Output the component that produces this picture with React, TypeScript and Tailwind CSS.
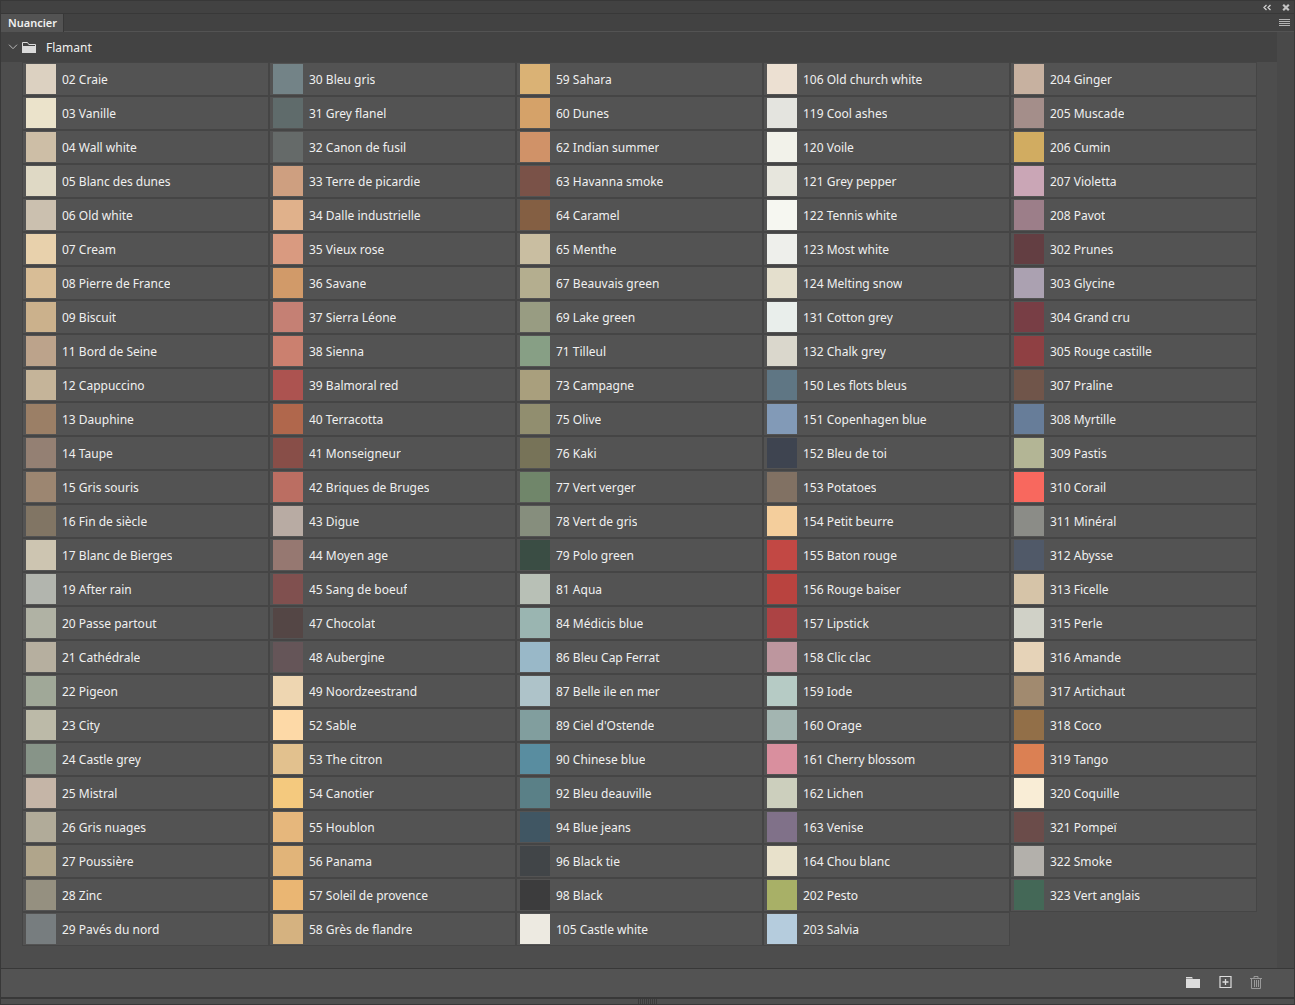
import { useState } from 'react';

type Swatch = [name: string, color: string];

const columns: Swatch[][] = [
  [
    ['02 Craie', '#dcd1c1'],
    ['03 Vanille', '#ebe3cb'],
    ['04 Wall white', '#cdbea6'],
    ['05 Blanc des dunes', '#dfd9c5'],
    ['06 Old white', '#cbc0af'],
    ['07 Cream', '#e8d1ac'],
    ['08 Pierre de France', '#d8bd96'],
    ['09 Biscuit', '#cbb18c'],
    ['11 Bord de Seine', '#bca38b'],
    ['12 Cappuccino', '#c5b499'],
    ['13 Dauphine', '#9b7f66'],
    ['14 Taupe', '#948073'],
    ['15 Gris souris', '#9c8671'],
    ['16 Fin de siècle', '#817564'],
    ['17 Blanc de Bierges', '#cdc5b1'],
    ['19 After rain', '#b2b5ae'],
    ['20 Passe partout', '#b0b2a4'],
    ['21 Cathédrale', '#b6af9f'],
    ['22 Pigeon', '#a0a898'],
    ['23 City', '#bcbaa8'],
    ['24 Castle grey', '#879488'],
    ['25 Mistral', '#c5b5a7'],
    ['26 Gris nuages', '#b1ab99'],
    ['27 Poussière', '#b0a58b'],
    ['28 Zinc', '#959080'],
    ['29 Pavés du nord', '#777d7f'],
  ],
  [
    ['30 Bleu gris', '#738387'],
    ['31 Grey flanel', '#5f6b6b'],
    ['32 Canon de fusil', '#656a69'],
    ['33 Terre de picardie', '#ce9f80'],
    ['34 Dalle industrielle', '#e0b18b'],
    ['35 Vieux rose', '#d99a80'],
    ['36 Savane', '#d19a69'],
    ['37 Sierra Léone', '#c58074'],
    ['38 Sienna', '#cb806f'],
    ['39 Balmoral red', '#ac5350'],
    ['40 Terracotta', '#b0674c'],
    ['41 Monseigneur', '#884e48'],
    ['42 Briques de Bruges', '#bb6e62'],
    ['43 Digue', '#b8aba3'],
    ['44 Moyen age', '#967871'],
    ['45 Sang de boeuf', '#80504f'],
    ['47 Chocolat', '#544645'],
    ['48 Aubergine', '#655558'],
    ['49 Noordzeestrand', '#eed6b1'],
    ['52 Sable', '#fdd9a7'],
    ['53 The citron', '#e2c18e'],
    ['54 Canotier', '#f4c97e'],
    ['55 Houblon', '#e6b77c'],
    ['56 Panama', '#e1b479'],
    ['57 Soleil de provence', '#eab673'],
    ['58 Grès de flandre', '#d5b280'],
  ],
  [
    ['59 Sahara', '#dab275'],
    ['60 Dunes', '#d5a269'],
    ['62 Indian summer', '#d09268'],
    ['63 Havanna smoke', '#7a5248'],
    ['64 Caramel', '#845f43'],
    ['65 Menthe', '#c9bea1'],
    ['67 Beauvais green', '#b4ae8f'],
    ['69 Lake green', '#989c82'],
    ['71 Tilleul', '#879f85'],
    ['73 Campagne', '#a99f7d'],
    ['75 Olive', '#918e6f'],
    ['76 Kaki', '#777358'],
    ['77 Vert verger', '#70866a'],
    ['78 Vert de gris', '#868e7d'],
    ['79 Polo green', '#3a4d44'],
    ['81 Aqua', '#b8c0b6'],
    ['84 Médicis blue', '#9ab5b1'],
    ['86 Bleu Cap Ferrat', '#99b8c8'],
    ['87 Belle ile en mer', '#aec3c9'],
    ["89 Ciel d'Ostende", '#819e9e'],
    ['90 Chinese blue', '#598da0'],
    ['92 Bleu deauville', '#5a8087'],
    ['94 Blue jeans', '#405663'],
    ['96 Black tie', '#414548'],
    ['98 Black', '#3c3c3d'],
    ['105 Castle white', '#edeae1'],
  ],
  [
    ['106 Old church white', '#ece0d2'],
    ['119 Cool ashes', '#e4e4df'],
    ['120 Voile', '#f2f2ea'],
    ['121 Grey pepper', '#e7e6dd'],
    ['122 Tennis white', '#f6f7f1'],
    ['123 Most white', '#eeefeb'],
    ['124 Melting snow', '#e4dfcd'],
    ['131 Cotton grey', '#e9eeeb'],
    ['132 Chalk grey', '#dad7cc'],
    ['150 Les flots bleus', '#5f7684'],
    ['151 Copenhagen blue', '#829ab7'],
    ['152 Bleu de toi', '#3e4450'],
    ['153 Potatoes', '#817163'],
    ['154 Petit beurre', '#f4ce9c'],
    ['155 Baton rouge', '#c24844'],
    ['156 Rouge baiser', '#b9433f'],
    ['157 Lipstick', '#ac4344'],
    ['158 Clic clac', '#bd969e'],
    ['159 Iode', '#b6cbc5'],
    ['160 Orage', '#a3b5b1'],
    ['161 Cherry blossom', '#d98f9e'],
    ['162 Lichen', '#cccfbd'],
    ['163 Venise', '#807189'],
    ['164 Chou blanc', '#e8e1cb'],
    ['202 Pesto', '#a8b067'],
    ['203 Salvia', '#b5ccdd'],
  ],
  [
    ['204 Ginger', '#c7b1a0'],
    ['205 Muscade', '#a48e8a'],
    ['206 Cumin', '#d1ac61'],
    ['207 Violetta', '#caa6b6'],
    ['208 Pavot', '#9c7e89'],
    ['302 Prunes', '#633e42'],
    ['303 Glycine', '#aba1b1'],
    ['304 Grand cru', '#783e45'],
    ['305 Rouge castille', '#8f4043'],
    ['307 Praline', '#70554a'],
    ['308 Myrtille', '#677d99'],
    ['309 Pastis', '#b3b595'],
    ['310 Corail', '#f8685e'],
    ['311 Minéral', '#8b8c87'],
    ['312 Abysse', '#505968'],
    ['313 Ficelle', '#d6c4a8'],
    ['315 Perle', '#d0d1c7'],
    ['316 Amande', '#e6d3b8'],
    ['317 Artichaut', '#a18a6f'],
    ['318 Coco', '#926f48'],
    ['319 Tango', '#db8053'],
    ['320 Coquille', '#f9edd6'],
    ['321 Pompeï', '#6b4c4a'],
    ['322 Smoke', '#b3b0ab'],
    ['323 Vert anglais', '#446857'],
  ],
];

function SwatchCell({ name, color }: { name: string; color: string }) {
  return (
    <li>
      <button
        type="button"
        className="flex h-[34px] w-full items-center gap-1.5 border border-[#454545] bg-[#535353] pl-[3px] text-left"
      >
        <span className="size-[30px] shrink-0" style={{ backgroundColor: color }} />
        <span className="truncate pt-0.5">{name}</span>
      </button>
    </li>
  );
}

export default function App() {
  const [open, setOpen] = useState(true);

  return (
    <div className="flex min-h-screen flex-col border-x border-[#383838] bg-[#4d4d4d] font-['Noto_Sans','Open_Sans',sans-serif] text-xs leading-4 text-[#f0f0f0]">
      {/* Title bar */}
      <div className="flex h-3.5 items-center justify-end gap-2.5 border-t border-b border-[#383838] bg-[#424242] pr-1">
        <button type="button" aria-label="Collapse panel">
          <svg className="block" width="9" height="7" viewBox="0 0 9 7" fill="none" stroke="#d0d0d0" strokeWidth="1.3">
            <path d="M3.5 1 1 3.5 3.5 6M7.5 1 5 3.5 7.5 6" />
          </svg>
        </button>
        <button type="button" aria-label="Close panel">
          <svg className="block" width="8" height="7" viewBox="0 0 8 7" fill="none" stroke="#c4c4c4" strokeWidth="2.2">
            <path d="m1.2.8 5.6 5.4M6.8.8 1.2 6.2" />
          </svg>
        </button>
      </div>

      {/* Tabs */}
      <div className="flex h-[18px] items-center justify-between border-b border-[#535353] bg-[#424242]">
        <button type="button" className="h-[18px] border-r border-[#383838] bg-[#535353] pr-1.5 pl-[7px] text-[11px] font-semibold">
          Nuancier
        </button>
        <button type="button" aria-label="Panel menu" className="pr-1">
          <svg className="block" width="11" height="7" viewBox="0 0 11 7" fill="#b4b4b4">
            <path d="M0 0h11v1H0zM0 2h11v1H0zM0 4h11v1H0zM0 6h11v1H0z" />
          </svg>
        </button>
      </div>

      {/* Swatches */}
      <div className="flex flex-1">
        <main className="flex-1">
          <button
            type="button"
            aria-expanded={open}
            onClick={() => setOpen(!open)}
            className="flex h-[30px] w-full items-center bg-[#434343] pl-[7px]"
          >
            <svg className={open ? 'block' : 'block -rotate-90'} width="10" height="6" viewBox="0 0 10 6" fill="none" stroke="#b8b8b8">
              <path d="m1 .7 4 4 4-4" />
            </svg>
            <svg className="mr-2.5 ml-1 block" width="14" height="11" viewBox="0 0 14 11">
              <path d="M.5 10V.5h5l1.3 2h6.7V10" fill="none" stroke="#dadada" />
              <path d="M0 4h14v7H0z" fill="#dadada" />
            </svg>
            <span className="pt-0.5">Flamant</span>
          </button>
          {open && (
            <div className="flex pr-5 pb-[22px] pl-[21px]">
              {columns.map((swatches) => (
                <ul key={swatches[0][0]} className="min-w-0 flex-1">
                  {swatches.map(([name, color]) => (
                    <SwatchCell key={name} name={name} color={color} />
                  ))}
                </ul>
              ))}
            </div>
          )}
        </main>
        {/* Scrollbar track */}
        <div className="w-[17px] bg-[#494949]" />
      </div>

      {/* Footer */}
      <div className="flex h-[29px] items-center justify-end border-t border-[#383838] bg-[#535353] pr-8 pb-0.5">
        <button type="button" aria-label="New group" className="mr-[19px]">
          <svg className="block" width="14" height="11" viewBox="0 0 14 11" fill="#dcdcdc">
            <path d="M0 0h6l1 1.5H0zM0 2h14v9H0z" />
          </svg>
        </button>
        <button type="button" aria-label="New swatch" className="mr-[18px]">
          <svg className="block" width="13" height="12" viewBox="0 0 13 12" fill="none" stroke="#dcdcdc">
            <path d="M1 .5h11v11H1z" strokeWidth="1.2" />
            <path d="M6.5 3v6M3.5 6h6" strokeWidth="1.3" />
          </svg>
        </button>
        <button type="button" aria-label="Delete swatch">
          <svg className="block" width="12" height="13" viewBox="0 0 12 13" fill="none" stroke="#999999">
            <path d="M0 2.5h12M4 2V.5h4V2M1.5 3v9.5h9V3M4.5 4v7M6.5 4v7M8.5 4v7" />
          </svg>
        </button>
      </div>

      {/* Resize grip */}
      <div className="flex h-2 justify-center border-t-2 border-b border-[#383838] bg-[#4f4f4f]">
        <svg className="block" width="20" height="5" viewBox="0 0 20 5" fill="#3c3c3c">
          <path d="M0 0h1v5H0zM2 0h1v5H2zM4 0h1v5H4zM6 0h1v5H6zM8 0h1v5H8zM10 0h1v5h-1zM12 0h1v5h-1zM14 0h1v5h-1zM16 0h1v5h-1zM18 0h1v5h-1z" />
        </svg>
      </div>
    </div>
  );
}
